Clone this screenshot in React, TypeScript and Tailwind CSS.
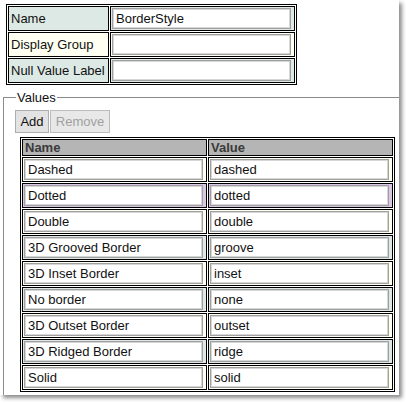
import React from "react";

const TEAL = "bg-[#dde9e5]";
const IVORY = "bg-[#fffff2]";
const THISTLE = "bg-[#dcc6e6]";

const rows: { name: string; value: string; bg: string }[] = [
  { name: "Dashed", value: "dashed", bg: IVORY },
  { name: "Dotted", value: "dotted", bg: THISTLE },
  { name: "Double", value: "double", bg: IVORY },
  { name: "3D Grooved Border", value: "groove", bg: TEAL },
  { name: "3D Inset Border", value: "inset", bg: IVORY },
  { name: "No border", value: "none", bg: TEAL },
  { name: "3D Outset Border", value: "outset", bg: IVORY },
  { name: "3D Ridged Border", value: "ridge", bg: TEAL },
  { name: "Solid", value: "solid", bg: IVORY },
];

function Field({ value }: { value: string }) {
  return (
    <input
      readOnly
      defaultValue={value}
      className="block w-[179px] h-[21px] border border-[#a0a0a0] shadow-[inset_0_0_0_1px_#d6d6d6] bg-white pl-[3px] text-[13px] leading-[17px] text-[#111] outline-none"
    />
  );
}

export default function App() {
  return (
    <div className="min-h-screen bg-white">
      <div
        className="relative w-[399px] h-[395px] bg-white overflow-hidden shadow-[3px_3px_4px_rgba(0,0,0,0.45)] text-[13px] text-[#111]"
        style={{ fontFamily: '"Liberation Sans", Arial, sans-serif' }}
      >
        {/* Properties table */}
        <div className="ml-[6px] mt-[4px] w-fit border border-black p-[1px] grid grid-cols-[101px_185px] gap-[1px]">
          <div className={`h-[25px] border border-black ${TEAL} pl-[2px] flex items-center`}>Name</div>
          <div className={`h-[25px] border border-black ${TEAL} p-[1px]`}>
            <Field value="BorderStyle" />
          </div>
          <div className={`h-[25px] border border-black ${IVORY} pl-[2px] flex items-center`}>Display Group</div>
          <div className={`h-[25px] border border-black ${IVORY} p-[1px]`}>
            <Field value="" />
          </div>
          <div className={`h-[25px] border border-black ${TEAL} pl-[2px] flex items-center`}>Null Value Label</div>
          <div className={`h-[25px] border border-black ${TEAL} p-[1px]`}>
            <Field value="" />
          </div>
        </div>

        {/* Values fieldset */}
        <fieldset className="ml-[3px] mt-[5px] w-[420px] h-[320px] border border-[#8a8a8a] p-0 m-0">
          <legend className="ml-[12px] px-[1px] leading-[15px]">Values</legend>
          <div className="pl-[11px] pt-[5px] flex gap-[1px]">
            <button className="h-[23px] w-[34px] border border-[#adadad] bg-[#e3e3e3] text-[13px] text-[#111]">
              Add
            </button>
            <button
              disabled
              className="h-[23px] w-[60px] border border-[#bcbcbc] bg-[#e8e8e8] text-[13px] text-[#a0a0a0]"
            >
              Remove
            </button>
          </div>
          <div className="ml-[16px] mt-[4px] w-fit border border-black p-[1px] grid grid-cols-[185px_185px] gap-[1px]">
            <div className="h-[17px] border border-black bg-[#b5b5b5] pl-[2px] font-bold text-[#3a3a3a] leading-[15px]">
              Name
            </div>
            <div className="h-[17px] border border-black bg-[#b5b5b5] pl-[2px] font-bold text-[#3a3a3a] leading-[15px]">
              Value
            </div>
            {rows.map((r) => (
              <React.Fragment key={r.name}>
                <div className={`h-[25px] border border-black ${r.bg} p-[1px]`}>
                  <Field value={r.name} />
                </div>
                <div className={`h-[25px] border border-black ${r.bg} p-[1px]`}>
                  <Field value={r.value} />
                </div>
              </React.Fragment>
            ))}
          </div>
        </fieldset>
      </div>
    </div>
  );
}
